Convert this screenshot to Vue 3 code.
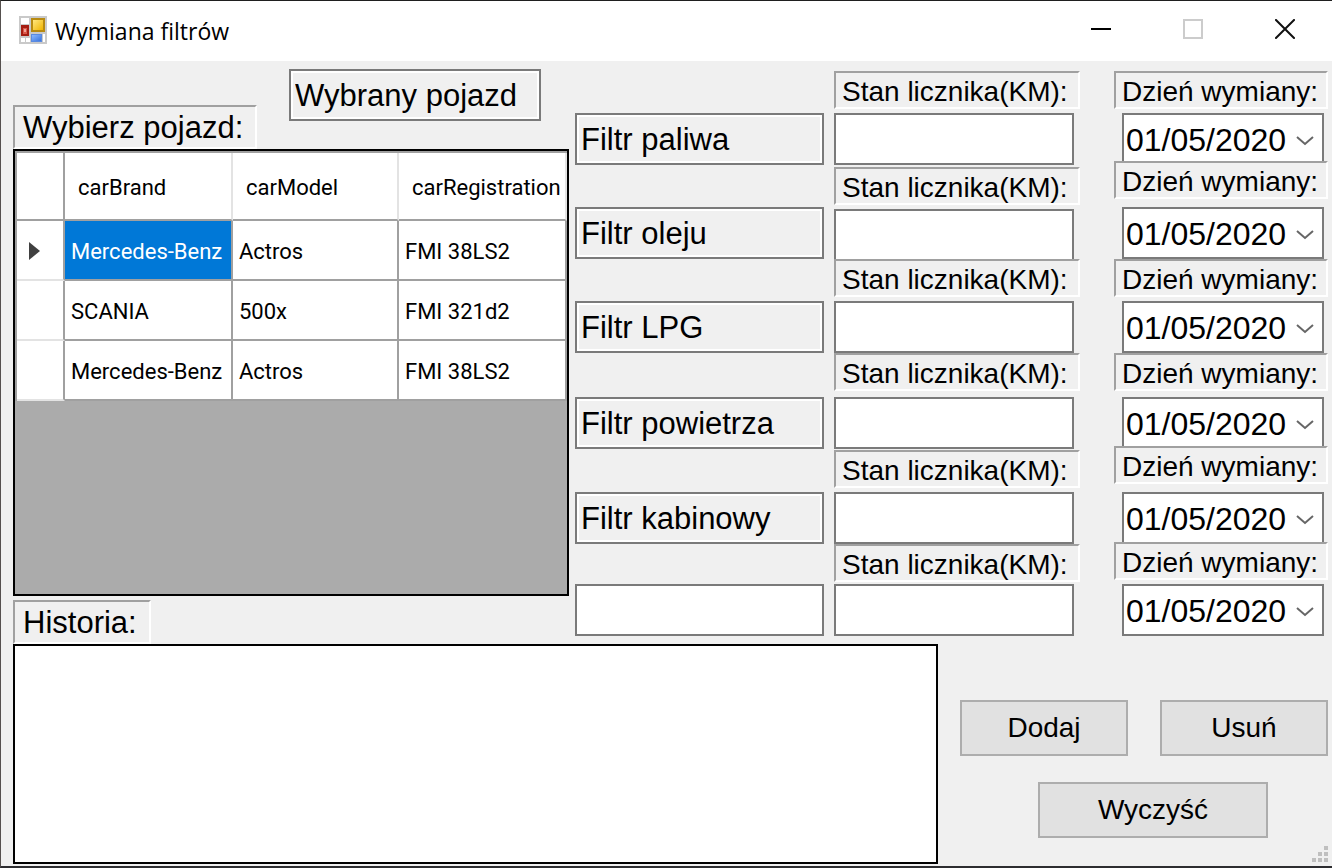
<script setup>
import { ref } from 'vue'

const cars = ref([
  { brand: 'Mercedes-Benz', model: 'Actros', registration: 'FMI 38LS2' },
  { brand: 'SCANIA', model: '500x', registration: 'FMI 321d2' },
  { brand: 'Mercedes-Benz', model: 'Actros', registration: 'FMI 38LS2' },
])
const selected = ref(0)

const filters = ref([
  { name: 'Filtr paliwa', km: '', date: '01/05/2020' },
  { name: 'Filtr oleju', km: '', date: '01/05/2020' },
  { name: 'Filtr LPG', km: '', date: '01/05/2020' },
  { name: 'Filtr powietrza', km: '', date: '01/05/2020' },
  { name: 'Filtr kabinowy', km: '', date: '01/05/2020' },
  { name: '', km: '', date: '01/05/2020', custom: true },
])
const chosenCar = ref('Wybrany pojazd')
const history = ref('')
</script>

<template>
  <div class="window">
    <header class="titlebar">
      <svg class="app-icon" width="28" height="28" viewBox="0 0 28 28" aria-hidden="true">
        <defs>
          <linearGradient id="gold" x1="0" y1="0" x2="1" y2="1">
            <stop offset="0" stop-color="#ffe680" />
            <stop offset="1" stop-color="#f0b400" />
          </linearGradient>
          <linearGradient id="blue" x1="0" y1="0" x2="1" y2="1">
            <stop offset="0" stop-color="#8ab8ff" />
            <stop offset="1" stop-color="#3b74dc" />
          </linearGradient>
        </defs>
        <rect width="28" height="28" fill="#c9c9c9" />
        <rect x="2" y="2" width="8" height="6" fill="#fff" />
        <rect x="2" y="22" width="4" height="4" fill="#fff" />
        <rect x="7" y="22" width="4" height="4" fill="#fff" />
        <rect x="24" y="18" width="2" height="8" fill="#fff" />
        <rect x="2" y="9" width="8" height="11" fill="#a51d12" />
        <rect x="4" y="12" width="4" height="6" fill="#d9574a" />
        <rect x="5" y="13" width="2" height="3" fill="#f0a59b" />
        <rect x="12" y="2" width="14" height="14" fill="#b88a10" />
        <rect x="14" y="4" width="10" height="10" fill="url(#gold)" />
        <rect x="12" y="18" width="11" height="8" fill="#5a8ae0" />
        <rect x="13" y="19" width="9" height="6" fill="url(#blue)" />
      </svg>
      <h1 class="title">Wymiana filtrów</h1>
      <button class="caption" type="button" aria-label="Minimalizuj">
        <svg width="20" height="20" viewBox="0 0 20 20"><path d="M0 10H20" stroke="#000" stroke-width="2" /></svg>
      </button>
      <button class="caption" type="button" aria-label="Maksymalizuj" disabled>
        <svg width="20" height="20" viewBox="0 0 20 20"><rect x="1" y="1" width="18" height="18" fill="none" stroke="#ccc" stroke-width="2" /></svg>
      </button>
      <button class="caption" type="button" aria-label="Zamknij">
        <svg width="20" height="20" viewBox="0 0 20 20"><path d="M1 1L19 19M19 1L1 19" stroke="#111" stroke-width="2" stroke-linecap="square" /></svg>
      </button>
    </header>

    <main class="upper">
      <section class="vehicles">
        <div class="picker">
          <span class="sunken big" id="grid-label">Wybierz pojazd:</span>
          <input v-model="chosenCar" class="field readonly chosen" readonly aria-label="Wybrany pojazd" />
        </div>
        <div class="datagrid">
          <table aria-labelledby="grid-label">
            <colgroup><col class="c-head" /><col class="c-brand" /><col class="c-model" /><col class="c-reg" /></colgroup>
            <thead>
              <tr><th></th><th>carBrand</th><th>carModel</th><th>carRegistration</th></tr>
            </thead>
            <tbody>
              <tr v-for="(car, i) in cars" :key="i" @click="selected = i">
                <th scope="row">
                  <svg v-if="selected === i" class="arrow" width="11" height="18" viewBox="0 0 11 18"><path d="M0 0L11 9L0 18Z" fill="#404040" /></svg>
                </th>
                <td :class="{ active: selected === i }">{{ car.brand }}</td>
                <td>{{ car.model }}</td>
                <td>{{ car.registration }}</td>
              </tr>
            </tbody>
          </table>
        </div>
        <label class="sunken big history-label" for="history">Historia:</label>
      </section>

      <section class="names">
        <input
          v-for="(f, i) in filters" :key="i" v-model="f.name" class="field"
          :class="{ readonly: !f.custom }" :readonly="!f.custom" :aria-label="f.name || 'Inny filtr'"
        />
      </section>

      <section class="counters">
        <template v-for="(f, i) in filters" :key="i">
          <label class="sunken" :for="'km' + i">Stan licznika(KM):</label>
          <input :id="'km' + i" v-model="f.km" class="field" />
        </template>
      </section>

      <section class="dates">
        <template v-for="(f, i) in filters" :key="i">
          <label class="sunken" :for="'date' + i">Dzień wymiany:</label>
          <div class="datepicker">
            <input :id="'date' + i" v-model="f.date" />
            <button type="button" aria-label="Kalendarz">
              <svg width="18" height="10" viewBox="0 0 18 10"><path d="M1 1L9 8L17 1" fill="none" stroke="#666" stroke-width="2" /></svg>
            </button>
          </div>
        </template>
      </section>
    </main>

    <footer class="lower">
      <textarea id="history" v-model="history" class="history"></textarea>
      <div class="actions">
        <div class="pair">
          <button class="btn" type="button">Dodaj</button>
          <button class="btn" type="button">Usuń</button>
        </div>
        <button class="btn clear" type="button">Wyczyść</button>
      </div>
      <svg class="grip" width="16" height="16" viewBox="0 0 16 16" aria-hidden="true">
        <path d="M12 0h4v4h-4zM6 6h4v4h-4zM12 6h4v4h-4zM0 12h4v4h-4zM6 12h4v4h-4zM12 12h4v4h-4z" fill="#bfbfbf" />
      </svg>
    </footer>
  </div>
</template>

<style>
body {
  background: #f0f0f0;
}
</style>

<style scoped>
* {
  box-sizing: border-box;
}
.window {
  min-height: 100vh;
  display: flex;
  flex-direction: column;
  background: #f0f0f0;
  border-top: 1px solid #1f1f1f;
  border-left: 1px solid #55504e;
  border-bottom: 2px solid #2d2d30;
  font-family: "Liberation Sans", Arial, sans-serif;
  font-size: 28px;
  color: #000;
}
input,
button,
textarea {
  font: inherit;
  color: inherit;
  margin: 0;
  border-radius: 0;
  outline: none;
}
.titlebar {
  display: flex;
  align-items: center;
  height: 60px;
  padding: 0 1px 2px 18px;
  background: #fff;
}
.title {
  flex: 1;
  margin: 0 0 0 8px;
  padding-top: 2px;
  font: 400 23px/32px "Open Sans", "Noto Sans", sans-serif;
}
.caption {
  width: 92px;
  height: 56px;
  display: flex;
  align-items: center;
  justify-content: center;
  border: 0;
  padding: 0 0 2px;
  background: none;
}
.upper {
  display: flex;
  padding: 8px 4px 0 12px;
}
.vehicles {
  flex: 1;
  min-width: 0;
  display: flex;
  flex-direction: column;
  margin-right: 6px;
}
.picker {
  display: flex;
  align-items: flex-end;
  height: 80px;
  gap: 32px;
}
.sunken {
  height: 38px;
  padding: 0 6px;
  border: 2px solid;
  border-color: #a0a0a0 #fff #fff #a0a0a0;
  line-height: 38px;
  white-space: nowrap;
}
.big {
  width: 244px;
  height: 44px;
  padding: 0 8px;
  font-size: 31px;
  line-height: 42px;
}
.history-label {
  width: 138px;
  margin-top: 4px;
}
.field {
  display: block;
  width: 100%;
  height: 52px;
  padding: 2px 4px 0;
  border: 2px solid #7a7a7a;
  background: #fff;
  font-size: 31px;
}
.readonly {
  background: #f0f0f0;
  box-shadow: inset 0 0 0 2px #fff;
}
.chosen {
  width: 252px;
  align-self: flex-start;
}
.datagrid {
  height: 447px;
  border: 2px solid #000;
  background: #ababab;
}
table {
  width: 100%;
  table-layout: fixed;
  border-spacing: 0;
  border-top: 2px solid #a0a0a0;
  border-left: 2px solid #a0a0a0;
  font-family: Roboto, "Liberation Sans", sans-serif;
  font-size: 22px;
}
.c-head {
  width: 48px;
}
.c-model {
  width: 166px;
}
.c-brand,
.c-reg {
  width: 168px;
}
th,
td {
  height: 60px;
  padding: 2px 0 0 6px;
  border-right: 2px solid #a0a0a0;
  border-bottom: 2px solid #a0a0a0;
  background: #fff;
  font-weight: 400;
  text-align: left;
  white-space: nowrap;
}
thead th {
  height: 68px;
  padding-left: 13px;
  border-right-color: #e3e3e3;
}
thead th:first-child {
  border-right-color: #a0a0a0;
}
tbody th {
  padding-left: 12px;
  border-bottom-color: #e3e3e3;
}
.arrow {
  display: block;
}
.active {
  background: #0078d7;
  color: #fff;
}
.names {
  display: grid;
  grid-template-rows: 94px 94px 96px 95px 92px 52px;
  align-items: start;
  align-content: start;
  width: 249px;
  margin-right: 10px;
  padding-top: 44px;
}
.counters,
.dates {
  display: grid;
  align-items: start;
  align-content: start;
  padding-top: 2px;
}
.counters {
  grid-template-rows: 42px 54px 42px 50px 42px 52px 44px 53px 42px 52px 40px 52px;
  width: 246px;
  margin-right: 34px;
}
.counters .field {
  width: 240px;
}
.dates {
  grid-template-rows: 42px 48px 46px 52px 42px 52px 44px 49px 46px 50px 42px 52px;
  width: 214px;
}
.counters .sunken,
.dates .sunken {
  position: relative;
  background: #f0f0f0;
}
.datepicker {
  display: flex;
  width: 202px;
  height: 52px;
  margin-left: 8px;
  border: 2px solid #7a7a7a;
  background: #fff;
}
.datepicker input {
  flex: 1;
  min-width: 0;
  padding: 2px 0 0 2px;
  border: 0;
  background: none;
  font-size: 32px;
}
.datepicker button {
  display: flex;
  align-items: center;
  justify-content: center;
  width: 34px;
  padding: 4px 0 0;
  border: 0;
  background: none;
}
.lower {
  position: relative;
  flex: 1;
  display: flex;
  gap: 22px;
  padding: 0 4px 2px 12px;
}
.history {
  display: block;
  flex: 1;
  min-width: 0;
  min-height: 220px;
  padding: 4px;
  border: 2px solid #000;
  background: #fff;
  resize: none;
}
.actions {
  width: 368px;
  padding-top: 56px;
}
.pair {
  display: flex;
  gap: 32px;
  margin-bottom: 26px;
}
.btn {
  flex: 1;
  height: 56px;
  padding: 0;
  border: 2px solid #adadad;
  background: #e1e1e1;
}
.clear {
  display: block;
  width: 230px;
  margin-left: 78px;
}
.grip {
  position: absolute;
  right: 4px;
  bottom: 4px;
}
</style>
